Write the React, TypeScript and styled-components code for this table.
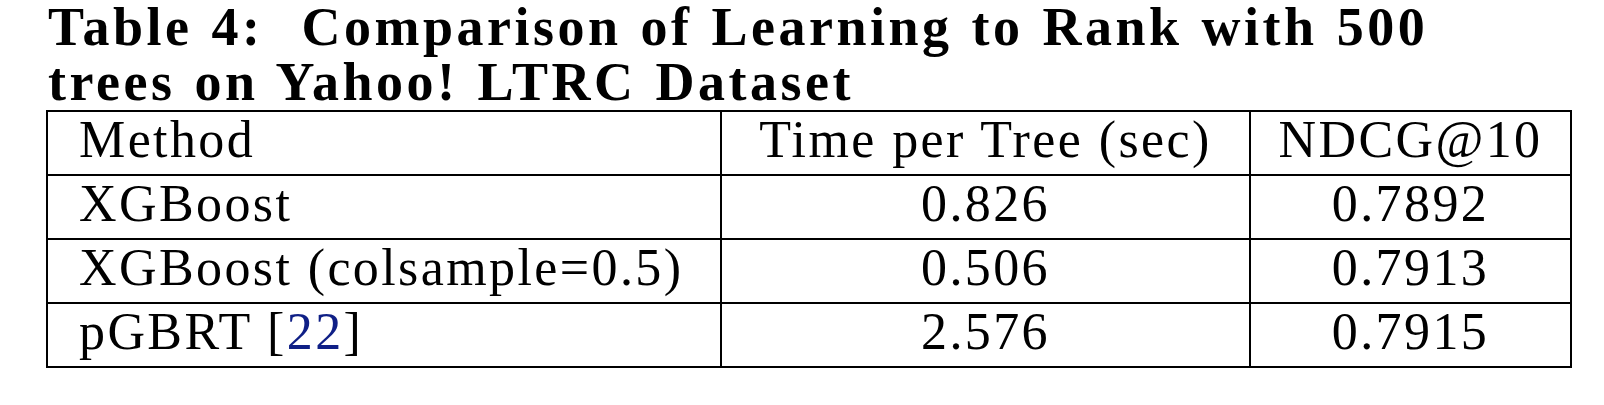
import React from 'react';
import styled, { createGlobalStyle } from 'styled-components';

const GlobalStyle = createGlobalStyle`
  html, body {
    margin: 0;
    padding: 0;
    background: #ffffff;
  }
`;

const Page = styled.main`
  padding: 0 0 0 46px;
  color: #000000;
  font-family: 'Liberation Serif', 'Times New Roman', serif;
`;

const Caption = styled.h4`
  margin: 0 0 0 2px;
  font-size: 54px;
  line-height: 55px;
  font-weight: 700;
  letter-spacing: 3.5px;
  word-spacing: 2px;
`;

const Table = styled.table`
  width: 1526px;
  table-layout: fixed;
  border-collapse: separate;
  border-spacing: 0;
  border: 2px solid #000;
  font-size: 52px;
  letter-spacing: 2.4px;
`;

const Cell = styled.td<{ $center?: boolean; $first?: boolean; $top?: boolean }>`
  height: 62px;
  padding: 0 0 7px ${(p) => (p.$center ? '0' : '31px')};
  box-sizing: border-box;
  line-height: 55px;
  vertical-align: top;
  white-space: nowrap;
  text-align: ${(p) => (p.$center ? 'center' : 'left')};
  border-left: ${(p) => (p.$first ? 'none' : '2px solid #000')};
  border-top: ${(p) => (p.$top ? 'none' : '2px solid #000')};
  ${(p) => (p.$top ? '' : 'height: 64px;')}
`;

const Cite = styled.span`
  color: #0f1f86;
`;

const rows: [React.ReactNode, string, string][] = [
  ['Method', 'Time per Tree (sec)', 'NDCG@10'],
  ['XGBoost', '0.826', '0.7892'],
  ['XGBoost (colsample=0.5)', '0.506', '0.7913'],
  [
    <>
      pGBRT [<Cite>22</Cite>]
    </>,
    '2.576',
    '0.7915',
  ],
];

function App() {
  return (
    <Page>
      <GlobalStyle />
      <Caption>
        Table 4:&nbsp; Comparison of Learning to Rank with 500
        <br />
        trees on Yahoo! LTRC Dataset
      </Caption>
      <Table>
        <colgroup>
          <col style={{ width: 672 }} />
          <col style={{ width: 529 }} />
          <col style={{ width: 321 }} />
        </colgroup>
        <tbody>
          {rows.map((r, i) => (
            <tr key={i}>
              <Cell $first $top={i === 0}>
                {r[0]}
              </Cell>
              <Cell $center $top={i === 0}>
                {r[1]}
              </Cell>
              <Cell $center $top={i === 0}>
                {r[2]}
              </Cell>
            </tr>
          ))}
        </tbody>
      </Table>
    </Page>
  );
}

export default App;
